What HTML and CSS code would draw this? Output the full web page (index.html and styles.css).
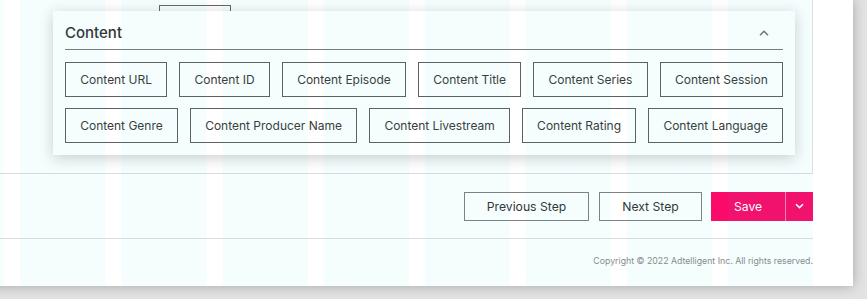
FILE: index.html
```html
<!DOCTYPE html>
<html lang="en">
<head>
<meta charset="utf-8">
<title>Content</title>
<link rel="stylesheet" href="styles.css">
</head>
<body>
<div class="panel">
  <div class="content">
    <div class="form-box">
      <div class="field-row">
        <button class="ghost-btn" type="button"></button>
      </div>
      <section class="card">
        <header class="card-head">
          <h2 class="card-title">Content</h2>
          <svg class="chev-up" width="10" height="6" viewBox="0 0 10 6"><path d="M1 5.2 5 1.2 9 5.2" fill="none" stroke="#707070" stroke-width="1.5"/></svg>
        </header>
        <div class="chip-row">
          <button class="chip" type="button">Content URL</button>
          <button class="chip" type="button">Content ID</button>
          <button class="chip" type="button">Content Episode</button>
          <button class="chip" type="button">Content Title</button>
          <button class="chip" type="button">Content Series</button>
          <button class="chip" type="button">Content Session</button>
        </div>
        <div class="chip-row">
          <button class="chip" type="button">Content Genre</button>
          <button class="chip" type="button">Content Producer Name</button>
          <button class="chip" type="button">Content Livestream</button>
          <button class="chip" type="button">Content Rating</button>
          <button class="chip" type="button">Content Language</button>
        </div>
      </section>
    </div>
    <div class="actions">
      <button class="btn btn-outline btn-prev" type="button">Previous Step</button>
      <button class="btn btn-outline btn-next" type="button">Next Step</button>
      <div class="split">
        <button class="btn btn-save" type="button">Save</button>
        <button class="btn btn-drop" type="button" aria-label="More"><svg width="9" height="6" viewBox="0 0 9 6"><path d="M1 1.2 4.5 4.6 8 1.2" fill="none" stroke="#fff" stroke-width="1.6"/></svg></button>
      </div>
    </div>
    <footer class="copyright">Copyright © 2022 Adtelligent Inc. All rights reserved.</footer>
    <div class="grid-overlay"></div>
  </div>
</div>
</body>
</html>
```
FILE: styles.css
```css
html, body {
  margin: 0;
  padding: 0;
}
body {
  background: #e3e3e3;
  width: 867px;
  height: 299px;
  overflow: hidden;
  font-family: Inter, "Liberation Sans", Arial, sans-serif;
  color: #333;
}
button {
  font-family: inherit;
  cursor: pointer;
}
.panel {
  margin-left: -30px;
  width: 843px;
  padding-right: 40px;
  background: #fff;
  box-shadow: 0 0 12px rgba(0, 0, 0, 0.28);
}
.content {
  position: relative;
}
.form-box {
  position: relative;
  height: 174px;
  box-sizing: border-box;
  border-bottom: 1px solid #dcdcdc;
  border-right: 1px solid #e2e2e2;
}
.field-row {
  padding: 5px 0 0 189px;
}
.ghost-btn {
  display: block;
  width: 72px;
  height: 30px;
  background: #fff;
  border: 1px solid #666;
  padding: 0;
}
.card {
  position: absolute;
  left: 83px;
  top: 11px;
  width: 742px;
  box-sizing: border-box;
  padding: 0 12px 12px;
  background: #fff;
  box-shadow: 0 3px 14px rgba(0, 0, 0, 0.2);
}
.card-head {
  display: flex;
  align-items: center;
  justify-content: space-between;
  height: 39px;
  box-sizing: border-box;
  padding-top: 5px;
  border-bottom: 1px solid #7a7a7a;
}
.card-title {
  margin: 0;
  font-size: 15px;
  font-weight: 500;
  color: #333;
  line-height: 20px;
}
.chev-up {
  margin-right: 14px;
  display: block;
}
.chip-row {
  display: flex;
  gap: 12px;
  margin-top: 12px;
}
.chip-row + .chip-row {
  margin-top: 11px;
}
.chip {
  flex: 1 1 auto;
  height: 35px;
  box-sizing: border-box;
  padding: 0 12px;
  border: 1px solid #5f5f5f;
  background: #fff;
  color: #3a3a3a;
  font-size: 12px;
  white-space: nowrap;
}
.actions {
  display: flex;
  justify-content: flex-end;
  align-items: center;
  height: 65px;
  border-bottom: 1px solid #dedede;
  box-sizing: border-box;
}
.btn {
  height: 29px;
  box-sizing: border-box;
  font-size: 12.2px;
  padding: 0;
}
.btn-outline {
  background: #fff;
  border: 1px solid #808080;
  color: #333;
}
.btn-prev {
  width: 125px;
}
.btn-next {
  width: 103px;
  margin-left: 10px;
}
.split {
  display: flex;
  margin-left: 9px;
}
.btn-save {
  width: 75px;
  border: 0;
  border-right: 1px solid #ff7fb0;
  background: #fb0a6a;
  color: #fff;
}
.btn-drop {
  width: 27px;
  border: 0;
  background: #fb0a6a;
  display: flex;
  align-items: center;
  justify-content: center;
}
.btn-drop svg {
  display: block;
}
.copyright {
  height: 47px;
  box-sizing: border-box;
  padding-top: 16px;
  text-align: right;
  font-size: 8.75px;
  line-height: 12px;
  color: #8a8a8a;
}
.grid-overlay {
  position: absolute;
  inset: 0;
  pointer-events: none;
  background-image: linear-gradient(to right, transparent 0 15.5px, rgba(0, 215, 215, 0.04) 15.5px 100%);
  background-size: 101.14px 100%;
  background-repeat: repeat-x;
  background-position: 34.4px 0;
}
```
